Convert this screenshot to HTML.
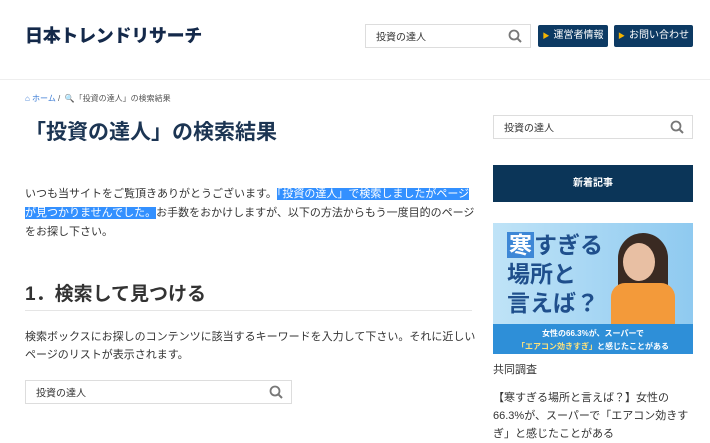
<!DOCTYPE html>
<html><head><meta charset="utf-8"><style>
body{margin:0;width:710px;height:428px;overflow:hidden;background:#fff;font-family:"Liberation Sans","Noto Sans CJK JP",sans-serif;color:#333;position:relative}
.a{position:absolute}
.sb{position:absolute;border:1px solid #ddd;background:#fff;font-size:10px;color:#333;box-sizing:border-box}
.sb span{position:absolute;left:10px;top:50%;transform:translateY(-50%)}
.sb svg{position:absolute;right:8px;top:50%;transform:translateY(-50%)}
.btn{position:absolute;background:#0d3a63;color:#fff;font-size:10px;height:22px;line-height:22px;top:25px;border-radius:2px;text-align:center}
.btn b{color:#f5b400;font-size:7px;margin-right:4px}
p{margin:0}
.hl{background:#3390ff;color:#fff}
</style></head><body>
<div class="a" style="left:25px;top:22px;font-size:18px;font-weight:900;color:#14294a;letter-spacing:-0.3px">日本トレンドリサーチ</div>
<div class="sb" style="left:365px;top:24px;width:166px;height:24px"><span>投資の達人</span><svg width="14" height="14" viewBox="0 0 14 14"><circle cx="6" cy="6" r="4.5" fill="none" stroke="#777" stroke-width="1.8"/><path d="M9.3 9.3L13 13" stroke="#777" stroke-width="2"/></svg></div>
<div class="btn" style="left:538px;width:70px"><b>▶</b>運営者情報</div>
<div class="btn" style="left:614px;width:79px"><b>▶</b>お問い合わせ</div>
<div class="a" style="left:0;top:79px;width:710px;height:1px;background:#eee"></div>
<div class="a" style="left:25px;top:93px;font-size:8px;color:#555"><span style="color:#3a7bd5">⌂ ホーム</span> / &nbsp;🔍「投資の達人」の検索結果</div>
<div class="a" style="left:25px;top:116px;font-size:21px;font-weight:bold;color:#1c3553">「投資の達人」の検索結果</div>
<div class="sb" style="left:493px;top:115px;width:200px;height:24px"><span>投資の達人</span><svg width="14" height="14" viewBox="0 0 14 14"><circle cx="6" cy="6" r="4.5" fill="none" stroke="#777" stroke-width="1.8"/><path d="M9.3 9.3L13 13" stroke="#777" stroke-width="2"/></svg></div>
<div class="a" style="left:25px;top:185px;width:452px;font-size:11px;line-height:19px">いつも当サイトをご覧頂きありがとうございます。<span class="hl">「投資の達人」で検索しましたがページが見つかりませんでした。</span>お手数をおかけしますが、以下の方法からもう一度目的のページをお探し下さい。</div>
<div class="a" style="left:25px;top:279px;font-size:19px;font-weight:bold;color:#333">1．検索して見つける</div>
<div class="a" style="left:25px;top:310px;width:447px;height:1px;background:#e5e5e5"></div>
<div class="a" style="left:25px;top:328px;width:452px;font-size:11px;line-height:18px">検索ボックスにお探しのコンテンツに該当するキーワードを入力して下さい。それに近しいページのリストが表示されます。</div>
<div class="sb" style="left:25px;top:380px;width:267px;height:24px"><span>投資の達人</span><svg width="14" height="14" viewBox="0 0 14 14"><circle cx="6" cy="6" r="4.5" fill="none" stroke="#777" stroke-width="1.8"/><path d="M9.3 9.3L13 13" stroke="#777" stroke-width="2"/></svg></div>
<div class="a" style="left:493px;top:165px;width:200px;height:37px;background:#0b3558;color:#fff;font-size:10px;line-height:37px;text-align:center;font-weight:bold">新着記事</div>
<div class="a" style="left:493px;top:223px;width:200px;height:131px;background:linear-gradient(90deg,#bfe3f7,#8fcaf0);overflow:hidden">
<div class="a" style="left:14px;top:8px;font-size:23px;font-weight:bold;color:#1f4f8c;line-height:29px"><span style="background:#3d87d6;color:#fff;padding:0 2px">寒</span>すぎる<br>場所と<br>言えば？</div>
<div class="a" style="left:125px;top:10px;width:50px;height:90px;border-radius:25px 25px 10px 10px;background:#3a2a22"></div>
<div class="a" style="left:130px;top:20px;width:32px;height:38px;border-radius:50%;background:#e8bfa3"></div>
<div class="a" style="left:118px;top:60px;width:64px;height:45px;border-radius:14px 14px 0 0;background:#f39a3a"></div>
<div class="a" style="left:0;top:101px;width:200px;height:30px;background:#2e8fd8;color:#fff;font-size:8px;text-align:center;line-height:13px;padding-top:3px;font-weight:bold">女性の66.3%が、スーパーで<br><span style="color:#ffe27a">「エアコン効きすぎ」</span>と感じたことがある</div>
</div>
<div class="a" style="left:493px;top:361px;font-size:11px">共同調査</div>
<div class="a" style="left:493px;top:389px;width:200px;font-size:11px;line-height:18px">【寒すぎる場所と言えば？】女性の66.3%が、スーパーで「エアコン効きすぎ」と感じたことがある</div>
</body></html>
